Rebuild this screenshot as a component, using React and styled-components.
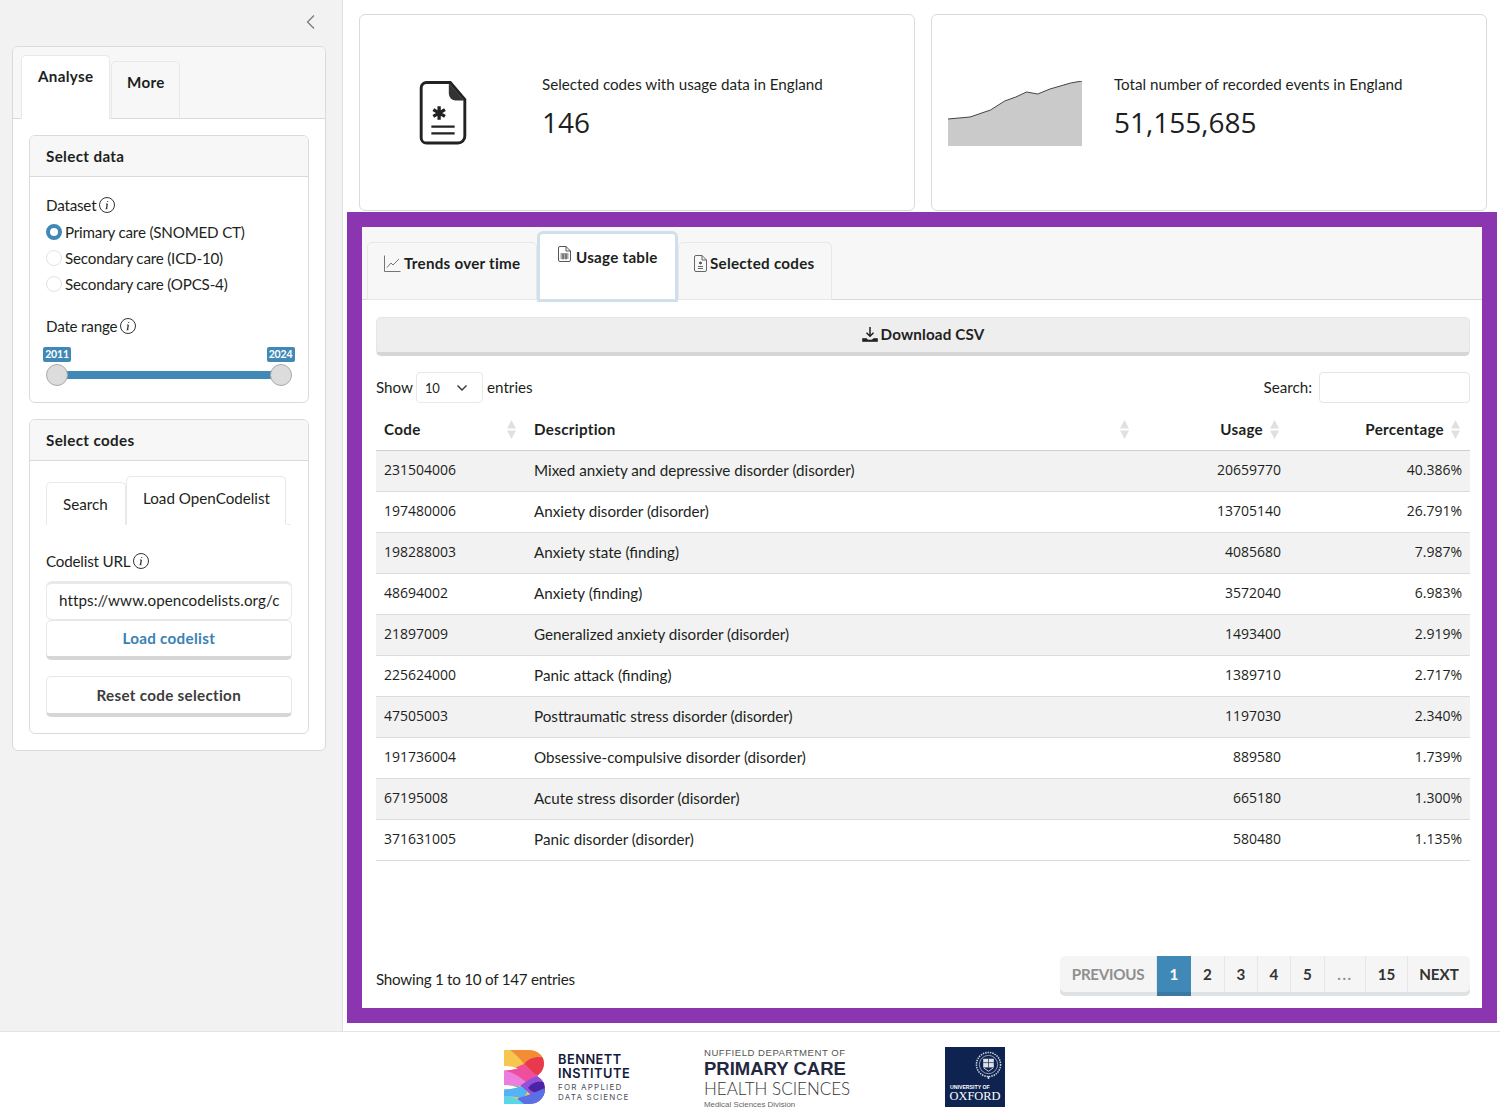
import React from "react";
import styled, { createGlobalStyle } from "styled-components";

const GlobalStyle = createGlobalStyle`
  html, body { margin: 0; padding: 0; height: 1116px; overflow: hidden; background: #fff; }
  body { font-family: "Lato", "Noto Sans", sans-serif; font-size: 15.2px; line-height: 24px; color: #1d1f21; }
  * { box-sizing: border-box; }
`;

const BLUE = "#4089b6";
const LINE = "#d9dadb";

const Page = styled.div`
  display: flex;
  flex-direction: column;
  width: 1500px;
  height: 1116px;
`;
const Top = styled.div`
  display: flex;
  height: 1032px;
  border-bottom: 1px solid #e4e4e4;
`;
const Sidebar = styled.aside`
  width: 343px;
  background: #f2f2f2;
  border-right: 1px solid #e0e0e0;
  padding: 0 16px 0 12px;
  display: flex;
  flex-direction: column;
`;
const Collapse = styled.div`
  height: 46px;
  display: flex;
  align-items: center;
  justify-content: flex-end;
  padding: 0 10px 3px 0;
  color: #777;
`;
const SideCard = styled.div`
  background: #fff;
  border: 1px solid ${LINE};
  border-radius: 6px;
  width: 313.5px;
  height: 705px;
  overflow: hidden;
`;
const SideTabs = styled.div`
  display: flex;
  align-items: flex-end;
  height: 72px;
  padding-left: 8px;
  background: #f7f7f7;
  border-bottom: 1px solid ${LINE};
`;
const SideTab = styled.div`
  font-weight: 700;
  letter-spacing: 0.3px;
  height: ${p => (p.$active ? 64 : 58)}px;
  width: ${p => p.$w}px;
  padding: ${p => (p.$active ? "8px 0 0 16px" : "8px 0 0 15px")};
  margin-bottom: -1px;
  margin-right: 1px;
  background: ${p => (p.$active ? "#fff" : "#f7f7f7")};
  border: 1px solid #e6e8ea;
  border-bottom: ${p => (p.$active ? "none" : "1px solid " + LINE)};
  border-radius: 5px 5px 0 0;
`;
const SideBody = styled.div`
  padding: 16px;
  display: flex;
  flex-direction: column;
  gap: 16px;
`;
const Card = styled.section`
  height: ${p => p.$h}px;
  border: 1px solid ${LINE};
  border-radius: 6px;
  overflow: hidden;
`;
const CardHeader = styled.div`
  height: 41px;
  padding: 8px 16px;
  font-weight: 700;
  letter-spacing: 0.35px;
  background: #f7f7f7;
  border-bottom: 1px solid ${LINE};
`;
const CardBody = styled.div`
  padding: 16px;
`;
const Label = styled.div`
  display: flex;
  align-items: center;
  gap: 3px;
  height: 24px;
  letter-spacing: -0.2px;
  margin-top: ${p => p.$mt || 0}px;
  margin-bottom: ${p => p.$mb || 0}px;
`;
const RadioRow = styled.div`
  display: flex;
  align-items: center;
  gap: 3px;
  height: 26px;
  white-space: nowrap;
  letter-spacing: -0.2px;
`;
const RadioDot = styled.span`
  width: 16px;
  height: 16px;
  flex: none;
  border-radius: 50%;
  background: #fff;
  border: ${p => (p.$on ? `4px solid ${BLUE}` : "1px solid #dfe1e3")};
`;
const Slider = styled.div`
  position: relative;
  height: 46px;
  margin-top: 6px;
`;
const SliderTrack = styled.div`
  position: absolute;
  left: 11px;
  right: 11px;
  top: 27px;
  height: 8px;
  background: ${BLUE};
`;
const SliderHandle = styled.span`
  position: absolute;
  top: 20px;
  ${p => p.$side}: 0;
  width: 22px;
  height: 22px;
  border-radius: 50%;
  background: #dcdcdc;
  border: 1px solid #aaa;
`;
const SliderPill = styled.span`
  position: absolute;
  top: 3px;
  ${p => p.$side}: -3px;
  width: 28px;
  height: 15px;
  border-radius: 2px;
  background: ${BLUE};
  color: #fff;
  font-size: 10.5px;
  font-weight: 700;
  letter-spacing: -0.2px;
  line-height: 15px;
  text-align: center;
`;
const InnerTabs = styled.div`
  display: flex;
  align-items: flex-end;
  height: 48px;
  width: 245px;
  border-bottom: 1px solid #eceef0;
  margin-bottom: 24px;
`;
const InnerTab = styled.div`
  height: ${p => (p.$active ? 49 : 43)}px;
  width: ${p => p.$w}px;
  margin-bottom: -1px;
  padding: 9px 0 0 16px;
  background: #fff;
  border: 1px solid #e6e8ea;
  border-bottom: ${p => (p.$active ? "1px solid #fff" : "none")};
  border-radius: 5px 5px 0 0;
  white-space: nowrap;
`;
const UrlBox = styled.div`
  height: 39px;
  padding: 4px 12px;
  border: 1px solid #e8e9ea;
  border-top: 3px solid #e9e9e9;
  border-radius: 6px;
  overflow: hidden;
  white-space: nowrap;
  letter-spacing: 0.08px;
`;
const Btn = styled.div`
  display: flex;
  align-items: center;
  justify-content: center;
  gap: 3px;
  height: ${p => p.$h || 40}px;
  margin-bottom: ${p => p.$mb || 0}px;
  padding-bottom: ${p => p.$pb || 1}px;
  font-weight: 700;
  letter-spacing: ${p => (p.$ls === undefined ? 0.3 : p.$ls)}px;
  color: ${p => p.$color || "#3c3c3c"};
  background: ${p => p.$bg || "#fff"};
  border: 1px solid #e6e6e6;
  border-bottom: 4px solid #d6d6d6;
  border-radius: 5px;
`;

const Main = styled.main`
  flex: 1;
  padding: 14px 3px 8px 4px;
  display: flex;
  flex-direction: column;
`;
const Boxes = styled.div`
  display: flex;
  gap: 16px;
  padding: 0 10px 0 12px;
  margin-bottom: 1px;
`;
const ValueBox = styled.div`
  width: 556px;
  height: 197px;
  display: flex;
  align-items: center;
  border: 1px solid ${LINE};
  border-radius: 6px;
`;
const Showcase = styled.div`
  width: 182px;
  flex: none;
  display: flex;
  justify-content: ${p => (p.$left ? "flex-start" : "center")};
  padding: ${p => (p.$left ? "2px 0 0 16px" : "0 16px 0 0")};
`;
const BoxText = styled.div`
  margin-top: -12px;
`;
const BoxTitle = styled.div`
  margin-bottom: 7px;
`;
const BoxValue = styled.div`
  font-family: "Open Sans", sans-serif;
  font-size: 28px;
  line-height: 38px;
`;
const Purple = styled.div`
  width: 1150px;
  height: 812px;
  border: 15px solid #8c35b0;
  background: #fff;
  display: flex;
  flex-direction: column;
`;
const TabBar = styled.div`
  display: flex;
  align-items: flex-end;
  height: 73px;
  padding-left: 5px;
  background: #f7f7f7;
  border-bottom: 1px solid ${LINE};
`;
const NavTab = styled.div`
  display: flex;
  align-items: flex-start;
  gap: 3px;
  font-weight: 700;
  letter-spacing: 0.25px;
  height: 58px;
  width: ${p => p.$w}px;
  padding: 8px 0 0 ${p => p.$pl || 16}px;
  margin-bottom: -1px;
  background: #f7f7f7;
  border: 1px solid #e6e8ea;
  border-radius: 5px 5px 0 0;
  white-space: nowrap;
`;
const ActiveTab = styled(NavTab)`
  position: relative;
  gap: 5px;
  height: 71px;
  margin-bottom: -3px;
  padding: 11px 0 0 18px;
  background: #fff;
  border: 3px solid #cfe0ec;
  border-radius: 6px 6px 0 0;
`;
const Content = styled.div`
  flex: 1;
  padding: 17px 12px 12px 14px;
  display: flex;
  flex-direction: column;
`;
const Controls = styled.div`
  display: flex;
  align-items: center;
  justify-content: space-between;
  height: 31px;
  margin: 16px 0 6px;
`;
const ShowGroup = styled.div`
  display: flex;
  align-items: center;
  gap: 3px;
  line-height: 22px;
  & > span { margin-top: -2px; }
`;
const PageSelect = styled.div`
  display: flex;
  align-items: center;
  justify-content: space-between;
  width: 67px;
  height: 31px;
  margin-right: 1px;
  padding: 0 14px 0 8px;
  font-size: 13px;
  letter-spacing: -0.4px;
  border: 1px solid #e8e9ea;
  border-radius: 4px;
`;
const SearchBox = styled.div`
  width: 151px;
  height: 31px;
  margin-left: 4px;
  border: 1px solid #e4e5e6;
  border-radius: 4px;
`;
const Table = styled.table`
  width: 100%;
  table-layout: fixed;
  border-collapse: collapse;
`;
const Th = styled.th`
  position: relative;
  height: 41px;
  padding: 8px 26px 8px 8px;
  font-weight: 700;
  letter-spacing: 0.3px;
  text-align: ${p => (p.$right ? "right" : "left")};
  border-bottom: 1px solid #cfcfcf;
`;
const SortArrows = styled.svg`
  position: absolute;
  right: 10px;
  top: 11px;
`;
const Row = styled.tr`
  background: ${p => (p.$striped ? "#f2f2f2" : "#fff")};
`;
const Td = styled.td`
  height: 41px;
  padding: 7px 8px 9px;
  text-align: ${p => (p.$right ? "right" : "left")};
  border-bottom: 1px solid #dcdcdc;
`;
const NumTd = styled(Td)`
  font-family: "Open Sans", sans-serif;
  font-size: 14px;
`;
const Bottom = styled.div`
  margin-top: auto;
  display: flex;
  align-items: flex-end;
  justify-content: space-between;
`;
const Showing = styled.div`
  margin-bottom: 5px;
  letter-spacing: -0.25px;
`;
const Pager = styled.div`
  display: flex;
  align-items: flex-start;
  height: 40px;
  border-radius: 5px;
  overflow: hidden;
  background: #f5f5f5;
  box-shadow: inset 0 -4px 0 #dfe2e5;
`;
const PageBtn = styled.div`
  width: ${p => p.$w}px;
  height: 36px;
  display: flex;
  align-items: center;
  justify-content: center;
  font-weight: 700;
  letter-spacing: ${p => p.$ls || 0}px;
  color: ${p => p.$color || "#333"};
  border-right: 1px solid #e4e6e8;
  &:last-child { border-right: none; }
`;
const PageOn = styled(PageBtn)`
  height: 40px;
  padding-bottom: 4px;
  background: ${BLUE};
  color: #fff;
  border-right: none;
  box-shadow: inset 0 -4px 0 #3a7aa2;
`;
const Footer = styled.footer`
  flex: 1;
  display: flex;
  align-items: center;
  padding: 6px 0 0 504px;
`;
const Bennett = styled.div`
  display: flex;
  align-items: center;
  gap: 13px;
  width: 200px;
`;
const BennettName = styled.div`
  font-family: "Inter", sans-serif;
  font-size: 12.8px;
  line-height: 14px;
  font-weight: 600;
  letter-spacing: 0.5px;
  color: #13183c;
`;
const BennettSub = styled.div`
  font-family: "Inter", sans-serif;
  font-size: 8px;
  line-height: 10px;
  margin-top: 1px;
  letter-spacing: 1.2px;
  color: #4d5060;
`;
const Nuffield = styled.div`
  width: 241px;
  padding-top: 3px;
  font-family: "Liberation Sans", sans-serif;
`;
const NufLine = styled.div`
  font-family: ${p => (p.$light ? '"Lato", sans-serif' : "inherit")};
  font-size: ${p => p.$size}px;
  line-height: ${p => p.$lh}px;
  font-weight: ${p => p.$weight || 400};
  letter-spacing: ${p => p.$ls || 0}px;
  color: ${p => p.$color || "#23283f"};
  white-space: nowrap;
`;
const Oxford = styled.div`
  width: 60px;
  height: 60px;
  background: #0f2350;
  color: #fff;
  display: flex;
  flex-direction: column;
  align-items: center;
  padding-top: 4px;
`;
const CrestWrap = styled.div`
  align-self: flex-end;
  padding-right: 3px;
  height: 29px;
`;
const OxSmall = styled.div`
  font-family: "Liberation Sans", sans-serif;
  font-size: 5.2px;
  font-weight: 700;
  line-height: 6px;
  margin-top: 4px;
  align-self: flex-start;
  padding-left: 5px;
  white-space: nowrap;
`;
const OxBig = styled.div`
  font-family: "Liberation Serif", serif;
  font-size: 12.4px;
  line-height: 12px;
`;

const rows = [
  ["231504006", "Mixed anxiety and depressive disorder (disorder)", "20659770", "40.386%"],
  ["197480006", "Anxiety disorder (disorder)", "13705140", "26.791%"],
  ["198288003", "Anxiety state (finding)", "4085680", "7.987%"],
  ["48694002", "Anxiety (finding)", "3572040", "6.983%"],
  ["21897009", "Generalized anxiety disorder (disorder)", "1493400", "2.919%"],
  ["225624000", "Panic attack (finding)", "1389710", "2.717%"],
  ["47505003", "Posttraumatic stress disorder (disorder)", "1197030", "2.340%"],
  ["191736004", "Obsessive-compulsive disorder (disorder)", "889580", "1.739%"],
  ["67195008", "Acute stress disorder (disorder)", "665180", "1.300%"],
  ["371631005", "Panic disorder (disorder)", "580480", "1.135%"],
];

const InfoIcon = () => (
  <svg width="16" height="16" viewBox="0 0 16 16" fill="none" stroke="#333" strokeWidth="1">
    <circle cx="8" cy="8" r="7.5" />
    <path d="M8.6 4.2v.9M8.3 6.8 7.5 11.8" strokeWidth="1.3" />
    <path d="M6.9 6.9h1.4M6.6 11.8h1.8" strokeWidth="0.8" />
  </svg>
);

const ChevronLeft = () => (
  <svg width="10" height="16" viewBox="0 0 10 16" fill="none" stroke="#777" strokeWidth="1.2">
    <path d="M8 1.5 1.5 8 8 14.5" />
  </svg>
);

const FileMedicalIcon = () => (
  <svg width="48" height="64" viewBox="0 0 48 66" fill="none">
    <path d="M7 1.5h24.5L46.5 19v38a7 7 0 0 1-7 7H7a5.500 5.500 0 0 1-5.500-5.500V7A5.500 5.500 0 0 1 7 1.500Z" stroke="#222" strokeWidth="3" />
    <path d="M30 2 46 20h-9a7 7 0 0 1-7-7Z" fill="#333" />
    <path d="M20 26v14M14 29.500l12 7M26 29.500l-12 7" stroke="#222" strokeWidth="3.400" />
    <path d="M12 47h24M12 54h24" stroke="#222" strokeWidth="2.400" />
  </svg>
);

const Spark = () => (
  <svg width="134" height="65" viewBox="0 0 134 65">
    <path d="M0 38 22 36 42.500 29 56.700 20 67.800 16 78.600 11 89.700 13 102 8 122.700 2 134 0V65H0Z" fill="#cacaca" />
    <path d="M0 38 22 36 42.500 29 56.700 20 67.800 16 78.600 11 89.700 13 102 8 122.700 2 134 0" fill="none" stroke="#444" strokeWidth="1" />
  </svg>
);

const ChartIcon = () => (
  <svg width="17" height="17" viewBox="0 0 17 17" fill="none" stroke="#666" strokeWidth="0.9" style={{ marginTop: 4 }}>
    <path d="M.5 .5v16h16" />
    <path d="M3 12.500 7 8l2 2 6-6" />
  </svg>
);

const TableFileIcon = () => (
  <svg width="13" height="16" viewBox="0 0 13 16" fill="none" stroke="#444" strokeWidth="0.9" style={{ marginTop: 1 }}>
    <path d="M2 .5h6l4.500 4.500v9a1.500 1.500 0 0 1-1.500 1.500H2A1.500 1.500 0 0 1 .5 14V2A1.500 1.500 0 0 1 2 .5Z" />
    <path d="M8 .5V5h4.500" />
    <path d="M2.500 8h8M2.500 10h8M2.500 12h8M5 7.500v6M8 7.500v6" />
  </svg>
);

const CodeFileIcon = () => (
  <svg width="13" height="17" viewBox="0 0 13 17" fill="none" stroke="#555" strokeWidth="0.9" style={{ marginTop: 4 }}>
    <path d="M2 .5h6l4.500 4.500v10a1.500 1.500 0 0 1-1.500 1.500H2A1.500 1.500 0 0 1 .5 15V2A1.500 1.500 0 0 1 2 .5Z" />
    <path d="M8 .5V5h4.500" />
    <path d="M6.500 6.500v3M5 7.300l3 1.400M8 7.300l-3 1.400M4 11.500h5M4 13.500h5" />
  </svg>
);

const DownloadIcon = () => (
  <svg width="16" height="16" viewBox="0 0 16 16" fill="none" stroke="#222" strokeWidth="1.500">
    <path d="M8 1v9M4.500 6.800 8 10.300l3.500-3.500" />
    <path d="M.5 12.500h4l1.500 1.500h4l1.500-1.500h4V15.500H.5Z" fill="#222" strokeWidth="0.6" />
  </svg>
);

const Caret = () => (
  <svg width="12" height="8" viewBox="0 0 12 8" fill="none" stroke="#333" strokeWidth="1.400">
    <path d="M1.500 1.500 6 6l4.500-4.500" />
  </svg>
);

const Sort = () => (
  <SortArrows width="9" height="19" viewBox="0 0 9 19" fill="#e0e0e0">
    <path d="M4.500 0 9 8.500H0ZM4.500 19 0 10.500h9Z" />
  </SortArrows>
);

// colour bands clipped to the B outline of the Bennett logo
const BennettMark = () => (
  <svg width="41" height="54" viewBox="0 0 41 54">
    <defs>
      <clipPath id="bshape">
        <path d="M0 0H24C34 0 40 6 40 13 40 19 37 23 33 26 38 29 41 33 41 39 41 48 34 54 26 54H0V39.500C5 39.500 10 38.500 14 37.500 10 36 5 35 0 35V20.500C5 20.500 10 19.500 14 18.500 10 17 5 16 0 16Z" />
      </clipPath>
    </defs>
    <g clipPath="url(#bshape)">
      <rect width="41" height="54" fill="#f6c64e" />
      <path d="M6 0H41V8C32 6 26 8 20 14 16 8 10 3 6 0Z" fill="#f28d35" />
      <path d="M20 14C26 7 34 6 41 8V26H32C28 22 24 18 20 14Z" fill="#e8394f" />
      <path d="M0 20.500C10 20 14 16 20 14 25 19 30 24 36 26L24 36C16 33 8 33 0 33Z" fill="#ef4e9c" />
      <path d="M0 20.500C8 22 16 26 24 34L14 36C10 35 5 35 0 35Z" fill="#ee7de0" />
      <path d="M0 35C10 35 16 36 24 40L20 48C12 47 6 46 0 46Z" fill="#52b3f6" />
      <path d="M36 26C30 26 24 30 16 36 20 38 24 42 28 46H41V30Z" fill="#8e52dc" />
      <path d="M24 38C28 32 34 31 40 32L41 40C36 44 30 44 24 38Z" fill="#4b24a6" />
      <path d="M14 48C22 46 28 44 41 38V54H14Z" fill="#5b6fe6" />
      <path d="M0 46C6 46 12 47 20 54H0Z" fill="#5bd6e6" />
    </g>
  </svg>
);

const Crest = () => (
  <svg width="27" height="29" viewBox="0 0 28 30" fill="none">
    <circle cx="14" cy="14" r="12.500" stroke="#cfd4de" strokeWidth="1.600" strokeDasharray="1.500 1" />
    <circle cx="14" cy="14" r="9.500" stroke="#cfd4de" strokeWidth="0.700" />
    <rect x="8.500" y="8" width="11" height="9" fill="#dfe2e8" />
    <path d="M8.500 12h11M14 8v9" stroke="#0f2350" strokeWidth="0.700" />
    <path d="M9 17.500 14 21l5-3.500" stroke="#cfd4de" />
    <path d="M14 26v3" stroke="#cfd4de" strokeWidth="1.500" />
  </svg>
);

const App = () => (
  <Page>
    <GlobalStyle />
    <Top>
      <Sidebar>
        <Collapse><ChevronLeft /></Collapse>
        <SideCard>
          <SideTabs>
            <SideTab $active $w={89}>Analyse</SideTab>
            <SideTab $w={69}>More</SideTab>
          </SideTabs>
          <SideBody>
            <Card $h={268}>
              <CardHeader>Select data</CardHeader>
              <CardBody>
                <Label $mb={2}>Dataset <InfoIcon /></Label>
                <RadioRow><RadioDot $on />Primary care (SNOMED CT)</RadioRow>
                <RadioRow><RadioDot />Secondary care (ICD-10)</RadioRow>
                <RadioRow><RadioDot />Secondary care (OPCS-4)</RadioRow>
                <Label $mt={17}>Date range <InfoIcon /></Label>
                <Slider>
                  <SliderTrack />
                  <SliderPill $side="left">2011</SliderPill>
                  <SliderPill $side="right">2024</SliderPill>
                  <SliderHandle $side="left" />
                  <SliderHandle $side="right" />
                </Slider>
              </CardBody>
            </Card>
            <Card $h={315}>
              <CardHeader>Select codes</CardHeader>
              <CardBody>
                <InnerTabs>
                  <InnerTab $w={80}>Search</InnerTab>
                  <InnerTab $active $w={160}>Load OpenCodelist</InnerTab>
                </InnerTabs>
                <Label $mb={8}>Codelist URL <InfoIcon /></Label>
                <UrlBox>https://www.opencodelists.org/c</UrlBox>
                <Btn $color="#3a81b5" $mb={16}>Load codelist</Btn>
                <Btn $h={41}>Reset code selection</Btn>
              </CardBody>
            </Card>
          </SideBody>
        </SideCard>
      </Sidebar>
      <Main>
        <Boxes>
          <ValueBox>
            <Showcase><FileMedicalIcon /></Showcase>
            <BoxText>
              <BoxTitle>Selected codes with usage data in England</BoxTitle>
              <BoxValue>146</BoxValue>
            </BoxText>
          </ValueBox>
          <ValueBox>
            <Showcase $left><Spark /></Showcase>
            <BoxText>
              <BoxTitle>Total number of recorded events in England</BoxTitle>
              <BoxValue>51,155,685</BoxValue>
            </BoxText>
          </ValueBox>
        </Boxes>
        <Purple>
          <TabBar>
            <NavTab $w={170}><ChartIcon />Trends over time</NavTab>
            <ActiveTab $w={141}><TableFileIcon />Usage table</ActiveTab>
            <NavTab $w={154} $pl={15}><CodeFileIcon />Selected codes</NavTab>
          </TabBar>
          <Content>
            <Btn $bg="#eeeeee" $h={39} $color="#222" $pb={3} $ls={0.15}><DownloadIcon />Download CSV</Btn>
            <Controls>
              <ShowGroup><span>Show</span> <PageSelect>10 <Caret /></PageSelect> <span>entries</span></ShowGroup>
              <ShowGroup><span>Search:</span> <SearchBox /></ShowGroup>
            </Controls>
            <Table>
              <colgroup>
                <col style={{ width: 150 }} />
                <col style={{ width: 613 }} />
                <col style={{ width: 150 }} />
                <col style={{ width: 181 }} />
              </colgroup>
              <thead>
                <tr>
                  <Th>Code<Sort /></Th>
                  <Th>Description<Sort /></Th>
                  <Th $right>Usage<Sort /></Th>
                  <Th $right>Percentage<Sort /></Th>
                </tr>
              </thead>
              <tbody>
                {rows.map((r, i) => (
                  <Row key={r[0]} $striped={i % 2 === 0}>
                    <NumTd>{r[0]}</NumTd>
                    <Td>{r[1]}</Td>
                    <NumTd $right>{r[2]}</NumTd>
                    <NumTd $right>{r[3]}</NumTd>
                  </Row>
                ))}
              </tbody>
            </Table>
            <Bottom>
              <Showing>Showing 1 to 10 of 147 entries</Showing>
              <Pager>
                <PageBtn $w={97} $color="#8f8f8f" $ls={-0.3}>PREVIOUS</PageBtn>
                <PageOn $w={34}>1</PageOn>
                <PageBtn $w={34}>2</PageBtn>
                <PageBtn $w={33}>3</PageBtn>
                <PageBtn $w={33}>4</PageBtn>
                <PageBtn $w={34}>5</PageBtn>
                <PageBtn $w={41} $color="#8f8f8f" $ls={1.5}>...</PageBtn>
                <PageBtn $w={42}>15</PageBtn>
                <PageBtn $w={62}>NEXT</PageBtn>
              </Pager>
            </Bottom>
          </Content>
        </Purple>
      </Main>
    </Top>
    <Footer>
      <Bennett>
        <BennettMark />
        <div>
          <BennettName>BENNETT<br />INSTITUTE</BennettName>
          <BennettSub>FOR APPLIED<br />DATA SCIENCE</BennettSub>
        </div>
      </Bennett>
      <Nuffield>
        <NufLine $size={9.6} $lh={11} $ls={0.5} $color="#555">NUFFIELD DEPARTMENT OF</NufLine>
        <NufLine $size={18.5} $lh={21} $weight={700}>PRIMARY CARE</NufLine>
        <NufLine $light $size={17} $lh={20} $color="#333" $weight={300}>HEALTH SCIENCES</NufLine>
        <NufLine $size={7.9} $lh={11} $color="#666">Medical Sciences Division</NufLine>
      </Nuffield>
      <Oxford>
        <CrestWrap><Crest /></CrestWrap>
        <OxSmall>UNIVERSITY OF</OxSmall>
        <OxBig>OXFORD</OxBig>
      </Oxford>
    </Footer>
  </Page>
);

export default App;
